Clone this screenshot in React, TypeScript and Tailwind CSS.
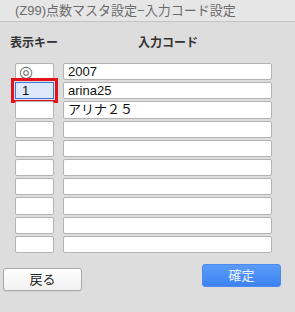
import React from "react";

const rows = [
  { key: "◎", code: "2007" },
  { key: "1", code: "arina25", selected: true },
  { key: "", code: "アリナ２５" },
  { key: "", code: "" },
  { key: "", code: "" },
  { key: "", code: "" },
  { key: "", code: "" },
  { key: "", code: "" },
  { key: "", code: "" },
  { key: "", code: "" },
];

const font = "font-['Liberation_Sans','Noto_Sans_CJK_JP',sans-serif]";

const App: React.FC = () => {
  return (
    <div
      className={`w-[295px] h-[312px] bg-[#dddddd] flex flex-col overflow-hidden ${font}`}
    >
      <div className="h-[22px] shrink-0 bg-[#e6e6e6] border-b border-[#c4c4c4] flex items-center pl-[15px] text-[13px] text-[#6b6b6b]">
        (Z99)点数マスタ設定−入力コード設定
      </div>

      <div className="flex items-center h-[36px] mt-[3px] text-[12px] font-bold text-[#333]">
        <span className="ml-[10px] w-[53px]">表示キー</span>
        <span className="ml-[75px]">入力コード</span>
      </div>

      <div className="flex flex-col gap-[2px] mt-[2px]">
        {rows.map((r, i) => (
          <div key={i} className="flex gap-[9px] pl-[15px] h-[17.2px]">
            <div
              className={
                r.selected
                  ? "w-[39px] h-full rounded-none border border-[#3b78d8] bg-[#dde9fb] outline-[3px] outline-solid outline-[#e3131b] outline-offset-[1px] flex items-center pl-[6px] text-[13px] text-[#111]"
                  : "w-[39px] h-full rounded-[2px] border border-[#b3b3b3] bg-white flex items-center pl-[3px] text-[16px] leading-none text-[#666] font-['DejaVu_Sans',sans-serif]"
              }
            >
              {r.key}
            </div>
            <div className="w-[209px] h-full rounded-[2px] border border-[#b3b3b3] bg-white flex items-center pl-[4px] text-[13px] text-[#111]">
              {r.code}
            </div>
          </div>
        ))}
      </div>

      <div className="flex justify-between items-start mt-[11px] pl-[3px] pr-[14px]">
        <button className="mt-[4px] w-[79px] h-[23px] rounded-[3px] border border-[#a9a9a9] bg-gradient-to-b from-white to-[#f1f1f1] text-[13px] text-[#222] shadow-[0_1px_0_rgba(0,0,0,0.05)]">
          戻る
        </button>
        <button className="w-[79px] h-[23px] rounded-[3px] bg-gradient-to-b from-[#5c9cf8] to-[#3d82f3] text-[13px] text-[#eef4ff] border border-[#4a8af2]">
          確定
        </button>
      </div>
    </div>
  );
};

export default App;
